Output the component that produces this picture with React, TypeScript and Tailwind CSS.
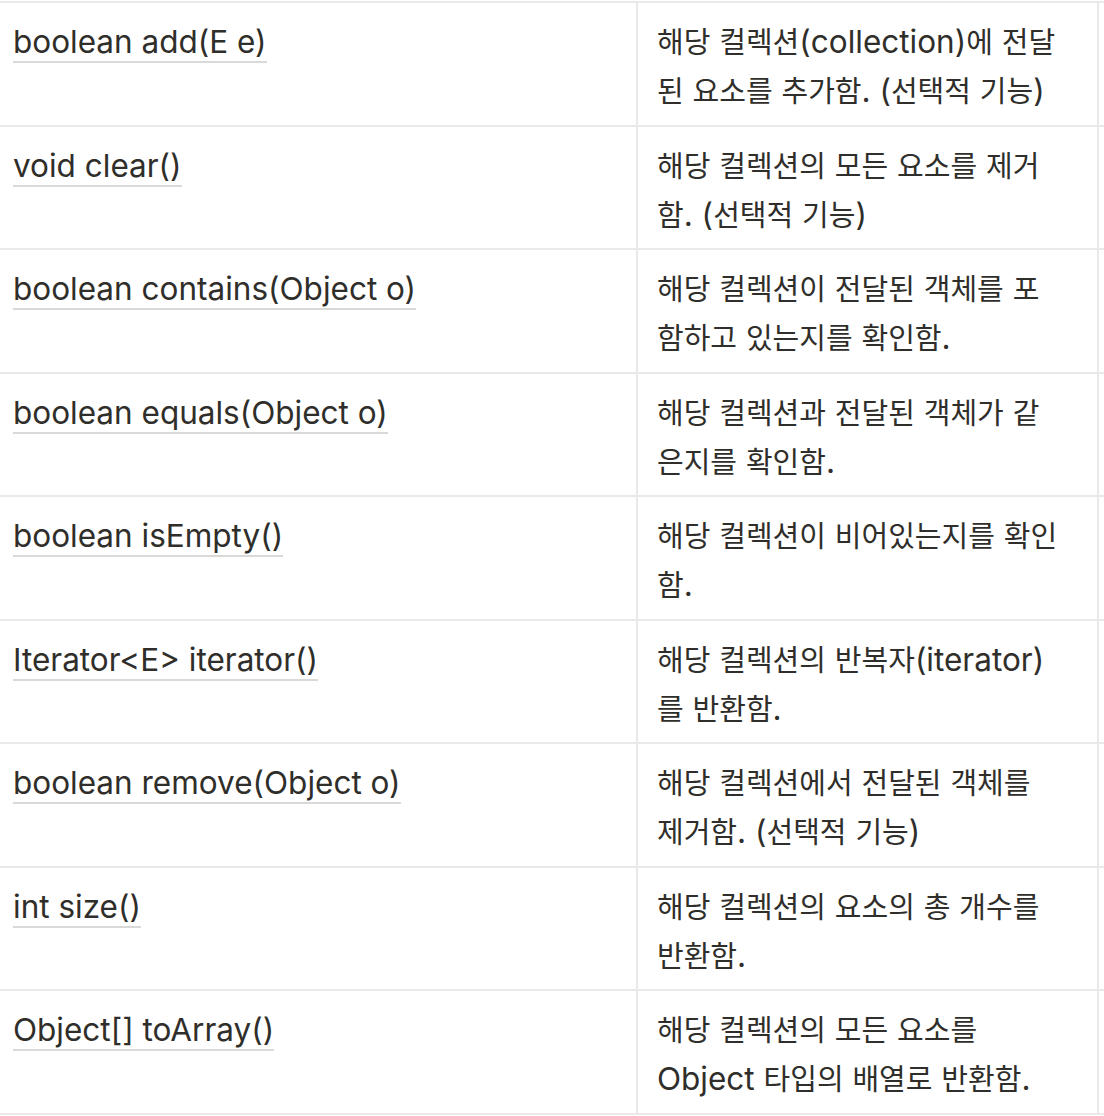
const rows = [
  { sig: "boolean add(E e)", desc: ["해당 컬렉션(collection)에 전달", "된 요소를 추가함. (선택적 기능)"] },
  { sig: "void clear()", desc: ["해당 컬렉션의 모든 요소를 제거", "함. (선택적 기능)"] },
  { sig: "boolean contains(Object o)", desc: ["해당 컬렉션이 전달된 객체를 포", "함하고 있는지를 확인함."] },
  { sig: "boolean equals(Object o)", desc: ["해당 컬렉션과 전달된 객체가 같", "은지를 확인함."] },
  { sig: "boolean isEmpty()", desc: ["해당 컬렉션이 비어있는지를 확인", "함."] },
  { sig: "Iterator<E> iterator()", desc: ["해당 컬렉션의 반복자(iterator)", "를 반환함."] },
  { sig: "boolean remove(Object o)", desc: ["해당 컬렉션에서 전달된 객체를", "제거함. (선택적 기능)"] },
  { sig: "int size()", desc: ["해당 컬렉션의 요소의 총 개수를", "반환함."] },
  { sig: "Object[] toArray()", desc: ["해당 컬렉션의 모든 요소를", "Object 타입의 배열로 반환함."] },
];

// hangul runs get a slightly smaller size so they sit like the original font
function Line({ text }: { text: string }) {
  const parts = text.split(/([\uac00-\ud7a3]+)/).filter(Boolean);
  return (
    <div className="h-[49px] whitespace-nowrap">
      {parts.map((p, i) =>
        /[\uac00-\ud7a3]/.test(p) ? (
          <span key={i} className="text-[29px] leading-[49px]">
            {p}
          </span>
        ) : (
          <span key={i}>{p}</span>
        )
      )}
    </div>
  );
}

export default function App() {
  return (
    <div className="w-[1104px] h-[1116px] overflow-hidden bg-white pt-px text-[#2f2e2a] text-[31.5px] font-normal leading-[49px] font-['Inter','Noto_Sans_CJK_KR',sans-serif]">
      <div className="w-[1300px] border-t-2 border-[#e9e9e7]">
        {rows.map((row) => (
          <div key={row.sig} className="flex border-b-2 border-[#e9e9e7]">
            <div className="w-[636px] shrink-0 pl-[13px] pt-[14px] pb-[9.5px]">
              <span className="border-b-2 border-[#d9d9d7]">{row.sig}</span>
            </div>
            <div className="w-[461px] shrink-0 border-l-2 border-[#e9e9e7] pl-[19px] pt-[14px] pb-[9.5px]">
              {row.desc.map((d) => (
                <Line key={d} text={d} />
              ))}
            </div>
            <div className="flex-1 border-l-2 border-[#e9e9e7]" />
          </div>
        ))}
      </div>
    </div>
  );
}
